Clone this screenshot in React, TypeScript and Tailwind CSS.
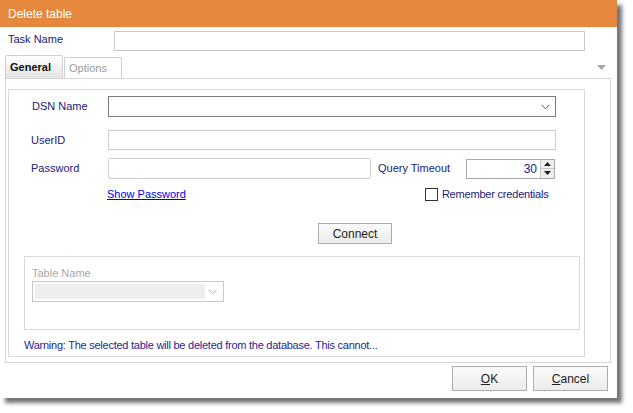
const font = "font-['Liberation_Sans',Arial,sans-serif]";

function Chevron({ color = "#555" }: { color?: string }) {
  return (
    <svg width="9" height="6" viewBox="0 0 9 6">
      <polyline points="0.5,0.8 4.5,4.8 8.5,0.8" fill="none" stroke={color} strokeWidth="1" />
    </svg>
  );
}

function Spinner() {
  return (
    <div className="flex h-[20px] w-[89px] border border-[#a8a8a8] bg-white">
      <div className="flex-1 pr-[3px] text-right text-[12px] leading-[18px] text-[#1a1a9a]">30</div>
      <div className="flex w-[14px] flex-col border-l border-[#c8c8c8]">
        <div className="flex flex-1 items-center justify-center border-b border-[#c8c8c8] bg-[#efefef]">
          <svg width="7" height="4" viewBox="0 0 7 4"><polygon points="0,4 7,4 3.5,0" fill="#222" /></svg>
        </div>
        <div className="flex flex-1 items-center justify-center bg-[#efefef]">
          <svg width="7" height="4" viewBox="0 0 7 4"><polygon points="0,0 7,0 3.5,4" fill="#222" /></svg>
        </div>
      </div>
    </div>
  );
}

function WinButton({ children, size }: { children: React.ReactNode; size: string }) {
  return (
    <div
      className={`flex items-center justify-center border border-[#adadad] bg-gradient-to-b from-[#fbfbfb] to-[#ececec] text-[12px] text-[#222] ${size}`}
    >
      {children}
    </div>
  );
}

export default function App() {
  return (
    <div className={`h-[413px] w-[633px] bg-white ${font}`}>
      <div className="flex h-[398px] w-[617px] flex-col bg-white shadow-[5px_5px_4px_rgba(0,0,0,0.55)]">
        {/* title bar */}
        <div className="flex h-[27px] items-center bg-[#e5883d] pl-[8px] text-[12px] text-white">Delete table</div>

        {/* task name */}
        <div className="mt-[4px] flex h-[20px] items-center">
          <div className="w-[114px] pb-[3px] pl-[8px] text-[11px] text-[#20207a]">Task Name</div>
          <div className="h-[20px] w-[471px] border border-[#c8c8c8]" />
        </div>

        {/* tabs */}
        <div className="ml-[5px] mt-[4px] flex h-[23px] w-[605px] items-end">
          <div className="flex h-[23px] w-[58px] items-center rounded-t-[2px] border border-b-0 border-[#cfcfcf] bg-gradient-to-b from-white to-[#e4e4e4] pl-[4px] text-[11px] font-bold text-[#111]">
            General
          </div>
          <div className="ml-px flex h-[21px] w-[58px] items-center border border-b-0 border-[#cfcfcf] bg-white pl-[4px] text-[11px] text-[#9a9a9a]">
            Options
          </div>
          <div className="ml-auto mb-[8px] mr-[4px]">
            <svg width="9" height="5" viewBox="0 0 9 5"><polygon points="0,0 9,0 4.5,5" fill="#a8a8a8" /></svg>
          </div>
        </div>

        {/* tab panel */}
        <div className="ml-[5px] h-[285px] w-[606px] border border-[#d6d6d6] pl-[2px] pt-[10px]">
          <div className="flex h-[268px] w-[577px] flex-col border border-[#d9d9d9] pl-[15px] text-[11px] text-[#20207a]">
            {/* DSN */}
            <div className="mt-[6px] flex h-[21px] items-center">
              <div className="w-[84px] pl-[8px]">DSN Name</div>
              <div className="flex h-[21px] w-[448px] items-center justify-end border border-[#7a7a7a] pr-[5px]">
                <Chevron />
              </div>
            </div>
            {/* UserID */}
            <div className="mt-[13px] flex h-[20px] items-center">
              <div className="w-[84px] pl-[7px]">UserID</div>
              <div className="h-[20px] w-[448px] border border-[#cfcfcf]" />
            </div>
            {/* Password */}
            <div className="mt-[8px] flex h-[21px] items-center">
              <div className="w-[84px] pl-[7px]">Password</div>
              <div className="h-[21px] w-[263px] rounded-[2px] border border-[#cfcfcf]" />
              <div className="ml-[7px] w-[88px]">Query Timeout</div>
              <Spinner />
            </div>
            {/* show password / remember */}
            <div className="mt-[8px] flex h-[14px] items-center">
              <div className="ml-[83px] text-[11px] text-[#0000ee] underline">Show Password</div>
              <div className="ml-[239px] h-[13px] w-[13px] border border-[#333] bg-white" />
              <div className="ml-[4px] tracking-[-0.2px]">Remember credentials</div>
            </div>
            {/* connect */}
            <div className="mt-[22px] flex">
              <div className="ml-[294px]">
                <WinButton size="h-[21px] w-[74px]">Connect</WinButton>
              </div>
            </div>
            {/* table name group */}
            <div className="mt-[12px] h-[74px] w-[556px] border border-[#d9d9d9] pl-[7px] pt-[9px]">
              <div className="text-[11px] leading-[14px] text-[#a8a8a8]">Table Name</div>
              <div className="mt-[1px] flex h-[21px] w-[192px] items-center border border-[#c8c8c8] pl-[2px] pr-[6px]">
                <div className="h-[15px] w-[170px] bg-[#eeeeee]" />
                <div className="ml-auto">
                  <Chevron color="#b0b0b0" />
                </div>
              </div>
            </div>
            <div className="mt-[7px] text-[11px] tracking-[-0.25px] text-[#1e1e9a]">
              Warning: The selected table will be deleted from the database. This cannot...
            </div>
          </div>
        </div>

        {/* buttons */}
        <div className="mt-[3px] flex justify-end gap-[6px] pr-[9px]">
          <WinButton size="h-[25px] w-[75px]">
            <span className="underline">O</span>K
          </WinButton>
          <WinButton size="h-[25px] w-[75px]">
            <span className="underline">C</span>ancel
          </WinButton>
        </div>
      </div>
    </div>
  );
}
